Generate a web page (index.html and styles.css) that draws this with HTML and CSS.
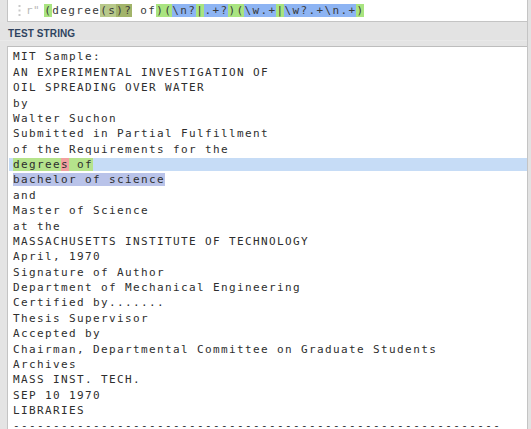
FILE: index.html
```html
<!DOCTYPE html>
<html lang="en">
<head>
<meta charset="utf-8">
<title>Regex tester</title>
<link rel="stylesheet" href="styles.css">
</head>
<body>
<div class="app">
  <div class="main">
    <div class="regex-box">
      <span class="grip"><svg width="3" height="11" viewBox="0 0 3 11"><rect x="0.5" y="0" width="2" height="2" fill="#c9c9c9"/><rect x="0.5" y="4.5" width="2" height="2" fill="#c9c9c9"/><rect x="0.5" y="9" width="2" height="2" fill="#c9c9c9"/></svg></span>
      <span class="delim">r"</span>
      <code class="regex"><span class="grp">(</span>degree<span class="sub">(s</span><span class="quant">)?</span> of<span class="grp">)(</span><span class="tok">\n?</span><span class="grp">|</span><span class="tok">.+?</span><span class="grp">)(</span><span class="tok">\w.+</span><span class="grp">|</span><span class="tok">\w?.+\n.+</span><span class="grp">)</span></code>
    </div>
    <div class="section-header">
      <h2 class="section-title">TEST STRING</h2>
    </div>
    <div class="test-box">
<pre class="test-text">MIT Sample:
AN EXPERIMENTAL INVESTIGATION OF
OIL SPREADING OVER WATER
by
Walter Suchon
Submitted in Partial Fulfillment
of the Requirements for the
<span class="match-line"><span class="m-grp">degree</span><span class="m-sub">s</span><span class="m-grp"> of</span></span><span class="m-next">bachelor of science</span>
and
Master of Science
at the
MASSACHUSETTS INSTITUTE OF TECHNOLOGY
April, 1970
Signature of Author
Department of Mechanical Engineering
Certified by.......
Thesis Supervisor
Accepted by
Chairman, Departmental Committee on Graduate Students
Archives
MASS INST. TECH.
SEP 10 1970
LIBRARIES
-------------------------------------------------------------</pre>
    </div>
  </div>
  <div class="edge"></div>
</div>
</body>
</html>
```

FILE: styles.css
```css
html, body {
  margin: 0;
  padding: 0;
}

body {
  background: #e4e4e4;
  width: 531px;
  height: 429px;
  overflow: hidden;
}

.app {
  display: flex;
  height: 429px;
  overflow: hidden;
}

.main {
  flex: 1;
  display: flex;
  flex-direction: column;
  min-width: 0;
}

.edge {
  width: 3px;
  border-left: 1px solid #c4c4c4;
  background: #e2e2e2;
}

.regex-box {
  margin-left: 7px;
  height: 21px;
  background: #fff;
  border-left: 1px solid #c4c4c4;
  border-bottom: 1px solid #c4c4c4;
  display: flex;
  align-items: center;
  font-family: "DejaVu Sans Mono", monospace;
  font-size: 11px;
  line-height: 21px;
}

.grip {
  display: flex;
  margin-left: 10px;
  width: 3px;
}

.delim {
  margin-left: 5px;
  color: #b8b8b8;
  letter-spacing: 0.5px;
}

.regex {
  margin-left: 4px;
  font-family: inherit;
  color: #3a3a3a;
  letter-spacing: 1.38px;
  white-space: pre;
}

.grp {
  background: #a9e480;
}

.sub {
  background: #b8c98a;
}

.quant {
  background: #a2b46a;
}

.tok {
  background: #8db4f3;
}

.section-header {
  height: 21px;
  padding: 6px 0 0 8px;
  box-sizing: border-box;
  background: #e3e3e3;
  border-bottom: 1px solid #e9e9e9;
}

.section-title {
  margin: 0;
  font-family: "Liberation Sans", Arial, sans-serif;
  font-weight: bold;
  font-size: 10px;
  line-height: 12px;
  letter-spacing: 0.1px;
  color: #2f4460;
}

.test-box {
  flex: 1;
  margin-top: 5px;
  margin-left: 7px;
  background: #fff;
  border-left: 1px solid #c4c4c4;
  border-top: 1px solid #bdbdbd;
  padding: 2.4px 0 0 5px;
}

.test-text {
  margin: 0;
  font-family: "DejaVu Sans Mono", monospace;
  font-size: 11px;
  line-height: 15.37px;
  letter-spacing: 1.38px;
  color: #2e2e2e;
}

.match-line {
  display: block;
  margin-left: -4px;
  padding-left: 4px;
  background: linear-gradient(to bottom, transparent 1.3px, #c6dcf6 1.3px, #c6dcf6 14px, transparent 14px);
}

.m-grp {
  background: #b5e38c;
}

.m-sub {
  background: #f2a0a0;
}

.m-next {
  background: #b9c3e9;
}
```
